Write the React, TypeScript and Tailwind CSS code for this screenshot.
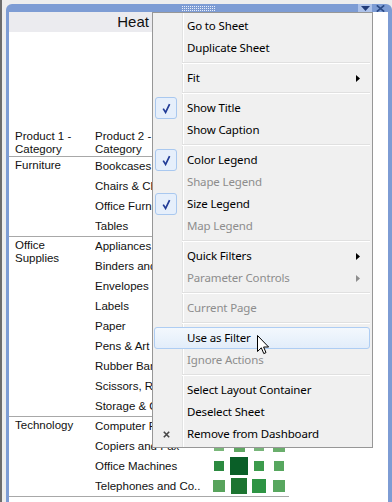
import React from "react";

type Sq = [number, string];
type Row = { name: string; sq: Sq[] };
type Group = { label: string[]; rows: Row[] };

const mid: Sq[] = [
  [12, "#5aa35e"],
  [14, "#2f8d43"],
  [10, "#6aaf6d"],
  [12, "#4f9f58"],
];

const groups: Group[] = [
  {
    label: ["Furniture"],
    rows: [
      { name: "Bookcases", sq: mid },
      { name: "Chairs & Chairmats", sq: mid },
      { name: "Office Furnishings", sq: mid },
      { name: "Tables", sq: mid },
    ],
  },
  {
    label: ["Office", "Supplies"],
    rows: [
      { name: "Appliances", sq: mid },
      { name: "Binders and Binder Accessories", sq: mid },
      { name: "Envelopes", sq: mid },
      { name: "Labels", sq: mid },
      { name: "Paper", sq: mid },
      { name: "Pens & Art Supplies", sq: mid },
      { name: "Rubber Bands", sq: mid },
      { name: "Scissors, Rulers and Trimmers", sq: mid },
      { name: "Storage & Organization", sq: mid },
    ],
  },
  {
    label: ["Technology"],
    rows: [
      { name: "Computer Peripherals", sq: mid },
      {
        name: "Copiers and Fax",
        sq: [
          [10, "#7ab77a"],
          [11, "#5fa762"],
          [10, "#78b57a"],
          [12, "#6aae6c"],
        ],
      },
      {
        name: "Office Machines",
        sq: [
          [10, "#2c8a40"],
          [18, "#0a5f28"],
          [10, "#3c9b4c"],
          [10, "#57a75f"],
        ],
      },
      {
        name: "Telephones and Co..",
        sq: [
          [12, "#58a35c"],
          [16, "#1d7431"],
          [14, "#2e9444"],
          [12, "#58a75f"],
        ],
      },
    ],
  },
];

type Item =
  | {
      label: string;
      checked?: boolean;
      disabled?: boolean;
      sub?: boolean;
      hover?: boolean;
      remove?: boolean;
    }
  | "sep";

const menu: Item[] = [
  { label: "Go to Sheet" },
  { label: "Duplicate Sheet" },
  "sep",
  { label: "Fit", sub: true },
  "sep",
  { label: "Show Title", checked: true },
  { label: "Show Caption" },
  "sep",
  { label: "Color Legend", checked: true },
  { label: "Shape Legend", disabled: true },
  { label: "Size Legend", checked: true },
  { label: "Map Legend", disabled: true },
  "sep",
  { label: "Quick Filters", sub: true },
  { label: "Parameter Controls", sub: true, disabled: true },
  "sep",
  { label: "Current Page", disabled: true },
  "sep",
  { label: "Use as Filter", hover: true },
  { label: "Ignore Actions", disabled: true },
  "sep",
  { label: "Select Layout Container" },
  { label: "Deselect Sheet" },
  { label: "Remove from Dashboard", remove: true },
];

function Grip() {
  const dots = [];
  for (let i = 0; i < 17; i++) {
    dots.push(<rect key={"a" + i} x={i * 2} y={0} width={1} height={1} />);
    dots.push(<rect key={"b" + i} x={i * 2} y={2} width={1} height={1} />);
    dots.push(<rect key={"c" + i} x={i * 2} y={4} width={1} height={1} />);
  }
  return (
    <svg width="34" height="5" className="fill-[#e9eefa]">
      {dots}
    </svg>
  );
}

function MenuItem({ item }: { item: Exclude<Item, "sep"> }) {
  return (
    <div
      className={`ml-[1px] mr-[2px] h-[22px] flex items-center rounded-[3px] border ${
        item.hover
          ? "border-[#aecdf3] bg-gradient-to-b from-[#f3f8fd] to-[#e2edfa]"
          : "border-transparent"
      }`}
    >
      <div className="w-[22px] h-[20px] flex items-center justify-center">
        {item.checked && (
          <div className="w-[22px] h-[22px] -my-[1px] rounded-[3px] border border-[#a9c8ef] bg-[#e6effb] flex items-center justify-center">
            <svg width="10" height="11" viewBox="0 0 10 11">
              <path
                d="M2.2 5.6 L4.6 9.4 L8.6 1.2"
                fill="none"
                stroke="#223c97"
                strokeWidth="1.7"
              />
            </svg>
          </div>
        )}
        {item.remove && (
          <svg width="7" height="7" viewBox="0 0 7 7">
            <path d="M0.8 0.8 L6.2 6.2 M6.2 0.8 L0.8 6.2" stroke="#474747" strokeWidth="1.6" />
          </svg>
        )}
      </div>
      <span
        className={`ml-[10px] flex-1 whitespace-nowrap ${
          item.disabled ? "text-[#8d8d8d]" : "text-black"
        }`}
      >
        {item.label}
      </span>
      {item.sub && (
        <svg width="4" height="7" viewBox="0 0 4 7" className="mr-[9px]">
          <path d="M0 0 L4 3.5 L0 7 Z" fill={item.disabled ? "#8d8d8d" : "#000"} />
        </svg>
      )}
    </div>
  );
}

export default function App() {
  return (
    <div className="relative w-[392px] h-[502px] overflow-hidden bg-[#ededed] border-l-2 border-[#6c6c6c] pt-[4px] pl-[4px] font-['Liberation_Sans',Arial,sans-serif]">
      <div className="h-[498px] rounded-t-[6px] bg-[#7d9cd4] pl-[3px] pr-[4px] flex flex-col">
        <div className="h-[8px] grid grid-cols-[1fr_auto_1fr] items-center">
          <div />
          <Grip />
          <div className="flex justify-end h-[8px]">
            <div className="w-[14px] bg-[#adc2ea] flex items-center justify-center">
              <svg width="9" height="5" viewBox="0 0 9 5">
                <path d="M0 0 L9 0 L4.5 5 Z" fill="#1f3a78" />
              </svg>
            </div>
            <div className="w-[12px] ml-[2px] mr-[2px] flex items-center justify-center">
              <svg width="9" height="7" viewBox="0 0 9 7">
                <path d="M0.8 0.3 L8.2 6.7 M8.2 0.3 L0.8 6.7" stroke="#2b4a86" strokeWidth="1.6" />
              </svg>
            </div>
          </div>
        </div>

        <div className="flex-1 bg-white">
          <div className="h-[20px] mr-[16px] pl-[16px] bg-[#ebebef] text-center text-[15px] leading-[20px] whitespace-nowrap overflow-hidden text-[#111]">
            Heat Map of Sales Profit
          </div>

          <div className="w-[280px] text-[11.5px] text-[#111]">
            <div className="flex pt-[98px] border-b border-[#a8a8a8] leading-[13px]">
              <div className="w-[86px] pl-[6px]">
                Product 1 -<br />
                Category
              </div>
              <div className="w-[114px]">
                Product 2 -<br />
                Category
              </div>
            </div>

            {groups.map((g) => (
              <div key={g.label.join(" ")} className="-mt-px flex border-b border-[#a8a8a8]">
                <div className="w-[86px] pl-[6px] pt-[3px] leading-[13px]">
                  {g.label.map((l) => (
                    <div key={l}>{l}</div>
                  ))}
                </div>
                <div className="flex flex-col">
                  {g.rows.map((r) => (
                    <div key={r.name} className="flex h-[20px] items-center">
                      <div className="w-[114px] leading-[20px] whitespace-nowrap overflow-hidden">
                        {r.name}
                      </div>
                      {r.sq.map(([s, c], i) => (
                        <div key={i} className="w-[20px] h-[20px] flex items-center justify-center">
                          <div style={{ width: s, height: s, backgroundColor: c }} />
                        </div>
                      ))}
                    </div>
                  ))}
                </div>
              </div>
            ))}
          </div>
        </div>
      </div>

      <div className="absolute left-[150px] top-[12px] w-[221px] border border-[#979797] bg-[#f0f0f0] py-[2px] text-[11.5px] tracking-[-0.15px] leading-[22px] font-['Noto_Sans','Open_Sans',sans-serif]">
        <div className="absolute left-[29px] top-0 bottom-0 w-[2px] border-l border-[#e2e3e3] bg-white" />
        {menu.map((m, i) =>
          m === "sep" ? (
            <div key={i} className="relative h-[8px] flex items-center ml-[29px] mr-[2px]">
              <div className="w-full h-[2px] border-t border-[#e0e0e0] bg-white" />
            </div>
          ) : (
            <div key={i} className="relative">
              <MenuItem item={m} />
            </div>
          )
        )}
      </div>

      <svg
        className="absolute left-[255px] top-[335px]"
        width="13"
        height="20"
        viewBox="0 0 13 20"
      >
        <path
          d="M0.5 0.5 L0.5 16.5 L4.3 12.8 L6.8 18.6 L9 17.6 L6.6 12 L11.6 12 Z"
          fill="#fff"
          stroke="#000"
          strokeWidth="1"
          strokeLinejoin="miter"
        />
      </svg>
    </div>
  );
}
